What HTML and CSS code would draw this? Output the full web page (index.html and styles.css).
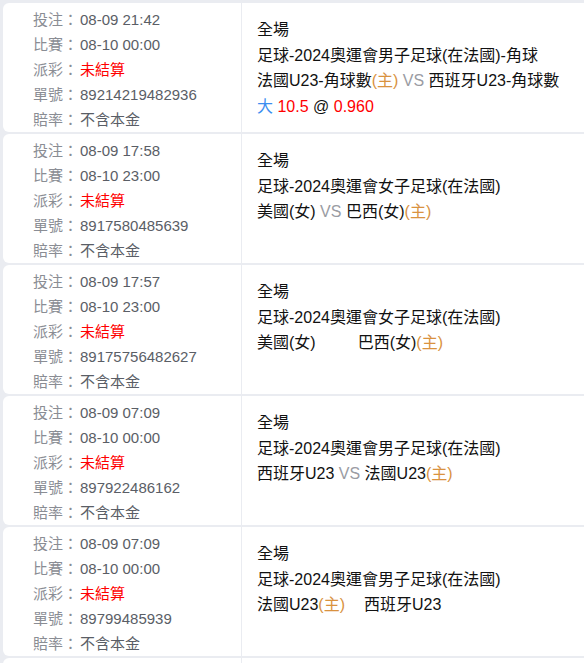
FILE: index.html
```html
<!DOCTYPE html>
<html>
<head>
    <title>注單記錄</title>
    <link rel="stylesheet" href="styles.css">
</head>
<body>
    <div class="bet-list">
        <div class="bet-row">
            <div class="bet-info">
                <div class="info-line"><span class="info-label">投注：</span><span class="info-value">08-09 21:42</span></div>
                <div class="info-line"><span class="info-label">比賽：</span><span class="info-value">08-10 00:00</span></div>
                <div class="info-line"><span class="info-label">派彩：</span><span class="info-value pending">未結算</span></div>
                <div class="info-line"><span class="info-label">單號：</span><span class="info-value">89214219482936</span></div>
                <div class="info-line"><span class="info-label">賠率：</span><span class="info-value">不含本金</span></div>
            </div>
            <div class="bet-detail">
                <div class="detail-line">全場</div>
                <div class="detail-line">足球-2024奧運會男子足球(在法國)-角球</div>
                <div class="detail-line">法國U23-角球數<span class="home">(主)</span> <span class="vs">VS</span> 西班牙U23-角球數</div>
                <div class="detail-line"><span class="pick">大</span> <span class="odds">10.5</span> @ <span class="odds">0.960</span></div>
            </div>
        </div>
        <div class="bet-row">
            <div class="bet-info">
                <div class="info-line"><span class="info-label">投注：</span><span class="info-value">08-09 17:58</span></div>
                <div class="info-line"><span class="info-label">比賽：</span><span class="info-value">08-10 23:00</span></div>
                <div class="info-line"><span class="info-label">派彩：</span><span class="info-value pending">未結算</span></div>
                <div class="info-line"><span class="info-label">單號：</span><span class="info-value">8917580485639</span></div>
                <div class="info-line"><span class="info-label">賠率：</span><span class="info-value">不含本金</span></div>
            </div>
            <div class="bet-detail">
                <div class="detail-line">全場</div>
                <div class="detail-line">足球-2024奧運會女子足球(在法國)</div>
                <div class="detail-line">美國(女) <span class="vs">VS</span> 巴西(女)<span class="home">(主)</span></div>
            </div>
        </div>
        <div class="bet-row">
            <div class="bet-info">
                <div class="info-line"><span class="info-label">投注：</span><span class="info-value">08-09 17:57</span></div>
                <div class="info-line"><span class="info-label">比賽：</span><span class="info-value">08-10 23:00</span></div>
                <div class="info-line"><span class="info-label">派彩：</span><span class="info-value pending">未結算</span></div>
                <div class="info-line"><span class="info-label">單號：</span><span class="info-value">89175756482627</span></div>
                <div class="info-line"><span class="info-label">賠率：</span><span class="info-value">不含本金</span></div>
            </div>
            <div class="bet-detail">
                <div class="detail-line">全場</div>
                <div class="detail-line">足球-2024奧運會女子足球(在法國)</div>
                <div class="detail-line">美國(女)<span class="vs-blank wide"></span>巴西(女)<span class="home">(主)</span></div>
            </div>
        </div>
        <div class="bet-row">
            <div class="bet-info">
                <div class="info-line"><span class="info-label">投注：</span><span class="info-value">08-09 07:09</span></div>
                <div class="info-line"><span class="info-label">比賽：</span><span class="info-value">08-10 00:00</span></div>
                <div class="info-line"><span class="info-label">派彩：</span><span class="info-value pending">未結算</span></div>
                <div class="info-line"><span class="info-label">單號：</span><span class="info-value">897922486162</span></div>
                <div class="info-line"><span class="info-label">賠率：</span><span class="info-value">不含本金</span></div>
            </div>
            <div class="bet-detail">
                <div class="detail-line">全場</div>
                <div class="detail-line">足球-2024奧運會男子足球(在法國)</div>
                <div class="detail-line">西班牙U23 <span class="vs">VS</span> 法國U23<span class="home">(主)</span></div>
            </div>
        </div>
        <div class="bet-row">
            <div class="bet-info">
                <div class="info-line"><span class="info-label">投注：</span><span class="info-value">08-09 07:09</span></div>
                <div class="info-line"><span class="info-label">比賽：</span><span class="info-value">08-10 00:00</span></div>
                <div class="info-line"><span class="info-label">派彩：</span><span class="info-value pending">未結算</span></div>
                <div class="info-line"><span class="info-label">單號：</span><span class="info-value">89799485939</span></div>
                <div class="info-line"><span class="info-label">賠率：</span><span class="info-value">不含本金</span></div>
            </div>
            <div class="bet-detail">
                <div class="detail-line">全場</div>
                <div class="detail-line">足球-2024奧運會男子足球(在法國)</div>
                <div class="detail-line">法國U23<span class="home">(主)</span><span class="vs-blank narrow"></span>西班牙U23</div>
            </div>
        </div>
        <div class="bet-row">
            <div class="bet-info"></div>
            <div class="bet-detail"></div>
        </div>
    </div>
</body>
</html>
```

FILE: styles.css
```css
body {
    margin: 0;
    background-color: #eaecf1;
    font-family: "Liberation Sans", Arial, "Noto Sans CJK TC", sans-serif;
}
.bet-list {
    display: flex;
    flex-direction: column;
    gap: 2px;
    padding: 3px 0 0 3px;
}
.bet-row {
    display: grid;
    grid-template-columns: 238px 1fr;
    gap: 1px;
    height: 129px;
}
.bet-info {
    background-color: #ffffff;
    border-radius: 6px 0 0 6px;
    padding: 4px 0 0 30px;
    font-size: 15px;
    line-height: 25px;
}
.info-line {
    display: flex;
    white-space: nowrap;
}
.info-label {
    width: 47px;
    color: #8a8d94;
}
.info-value {
    color: #5a5e66;
}
.info-value.pending {
    color: #ff0000;
}
.bet-detail {
    background-color: #ffffff;
    padding: 14px 0 0 15px;
    font-size: 16px;
    line-height: 25.5px;
    color: #111111;
}
.detail-line {
    white-space: nowrap;
}
.home {
    color: #d9923f;
}
.vs {
    color: #9a9ca3;
}
.vs-blank {
    display: inline-block;
}
.vs-blank.wide {
    width: 42px;
}
.vs-blank.narrow {
    width: 19px;
}
.pick {
    color: #3c8ef0;
}
.odds {
    color: #ff0000;
}
```
